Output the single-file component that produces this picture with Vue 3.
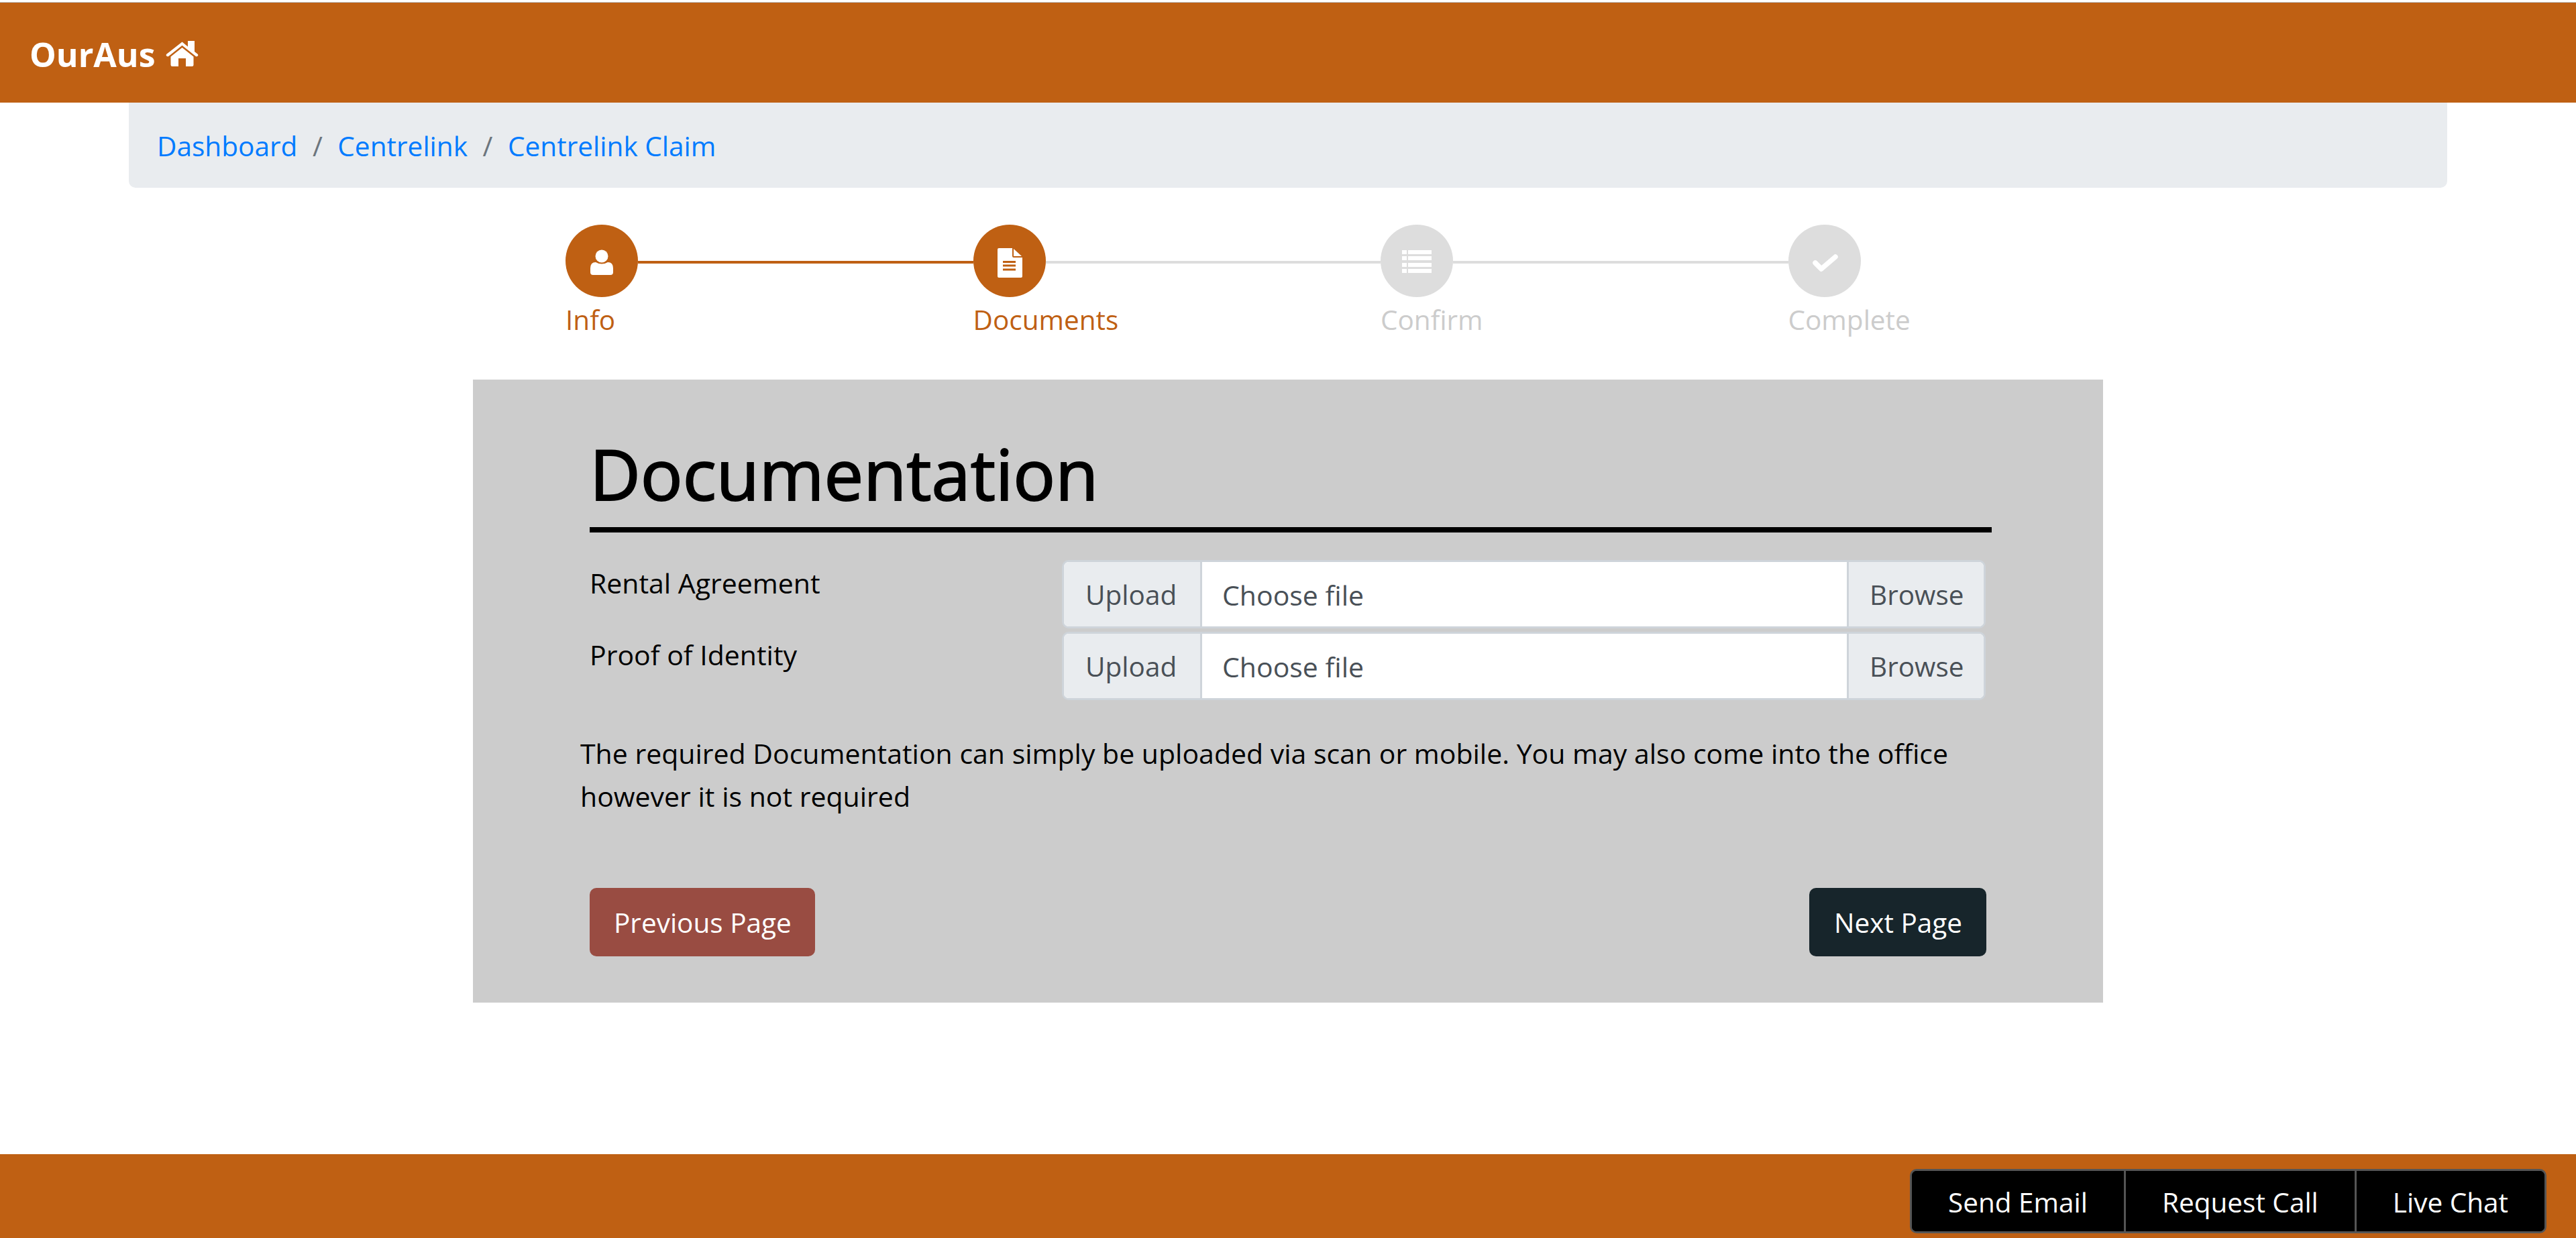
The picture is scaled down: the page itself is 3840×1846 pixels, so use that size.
<script setup>
const crumbs = ['Dashboard', 'Centrelink', 'Centrelink Claim']
const docs = ['Rental Agreement', 'Proof of Identity']
const actions = ['Send Email', 'Request Call', 'Live Chat']
</script>

<template>
  <div class="page">
    <header class="navbar">
      <span class="brand">OurAus</span>
      <svg class="home" viewBox="0 0 49 39">
        <path d="M24.5 2.5 L33 9.5 V1 H43 V17 L47.5 20.5 Q49 22 47.7 23.6 Q46.2 25 44.6 23.8 L24.5 7.8 L4.4 23.8 Q2.8 25 1.3 23.6 Q0 22 1.5 20.5 Z" />
        <path d="M24.5 11 L41.5 24.5 V36.5 Q41.5 39 39 39 H30 V27 H19 V39 H10 Q7.5 39 7.5 36.5 V24.5 Z" />
      </svg>
    </header>

    <nav class="breadcrumb">
      <template v-for="(crumb, i) in crumbs" :key="crumb">
        <span v-if="i > 0" class="sep">/</span>
        <a href="#" class="crumb">{{ crumb }}</a>
      </template>
    </nav>

    <div class="stepper">
      <div class="step done">
        <div class="track">
          <div class="circle">
            <svg viewBox="-3 -1 80 80">
              <circle cx="37" cy="32" r="9.5" />
              <path d="M28 41 Q37 46 46 41 Q54 41 54 50 V56 Q54 60 50 60 H24 Q20 60 20 56 V50 Q20 41 28 41 Z" />
            </svg>
          </div>
          <div class="line"></div>
        </div>
        <span class="step-label">Info</span>
      </div>
      <div class="step done">
        <div class="track">
          <div class="circle">
            <svg viewBox="0 -1 80 80">
              <path d="M24 20 H44 V32 Q44 34 46 34 H59 V62 Q59 64 57 64 H24 Q22 64 22 62 V22 Q22 20 24 20 Z M30 39 V42 H49 V39 Z M30 44.5 V47.5 H49 V44.5 Z M30 50.5 V53.5 H49 V50.5 Z" fill-rule="evenodd" />
              <path d="M46 21 L58 32 H46 Z" />
            </svg>
          </div>
          <div class="line pending"></div>
        </div>
        <span class="step-label">Documents</span>
      </div>
      <div class="step">
        <div class="track">
          <div class="circle">
            <svg viewBox="0 -1 80 80">
              <path d="M18 23 H25 V29 H18 Z M27 23 H62 V29 H27 Z M18 32 H25 V38 H18 Z M27 32 H62 V38 H27 Z M18 42 H25 V48 H18 Z M27 42 H62 V48 H27 Z M18 51 H25 V57 H18 Z M27 51 H62 V57 H27 Z" />
            </svg>
          </div>
          <div class="line pending"></div>
        </div>
        <span class="step-label">Confirm</span>
      </div>
      <div class="step last">
        <div class="track">
          <div class="circle">
            <svg viewBox="0 -1 80 80">
              <path d="M26 42 L35 51 L56 33" fill="none" stroke="#fff" stroke-width="7.5" stroke-linecap="round" stroke-linejoin="round" />
            </svg>
          </div>
        </div>
        <span class="step-label">Complete</span>
      </div>
    </div>

    <main class="card">
      <h1 class="title">Documentation</h1>
      <div class="uploads">
        <div v-for="doc in docs" :key="doc" class="upload-row">
          <label class="doc-label">{{ doc }}</label>
          <div class="file-group">
            <span class="addon upload">Upload</span>
            <span class="file-name">Choose file</span>
            <span class="addon browse">Browse</span>
          </div>
        </div>
      </div>
      <p class="note">The required Documentation can simply be uploaded via scan or mobile. You may also come into the office however it is not required</p>
      <div class="buttons">
        <button class="btn prev">Previous Page</button>
        <button class="btn next">Next Page</button>
      </div>
    </main>

    <footer class="footer">
      <div class="btn-group">
        <button v-for="action in actions" :key="action" class="action">{{ action }}</button>
      </div>
    </footer>
  </div>
</template>

<style>
body {
  margin: 0;
  background: #fff;
}
</style>

<style scoped>
.page {
  min-height: 100vh;
  display: flex;
  flex-direction: column;
  font-family: "Open Sans", "Noto Sans", sans-serif;
  font-size: 40.5px;
  line-height: 60px;
  color: #000;
}
.navbar {
  margin-top: 3px;
  border-top: 1px solid #bbb;
  height: 150px;
  box-sizing: border-box;
  background: #bf6013;
  display: flex;
  align-items: center;
  padding: 4px 0 0 44px;
  color: #fff;
}
.brand {
  font-size: 50px;
  font-weight: 700;
}
.home {
  width: 49px;
  height: 39px;
  margin-left: 15px;
  margin-top: -2px;
  fill: #fff;
}
.breadcrumb {
  margin: 0 192px;
  height: 127px;
  box-sizing: border-box;
  padding: 3px 42px 0;
  font-size: 40.6px;
  background: #e9ecef;
  border-radius: 0 0 10px 10px;
  display: flex;
  align-items: center;
}
.crumb {
  color: #007bff;
  text-decoration: none;
}
.sep {
  color: #6c757d;
  padding: 0 22.5px;
}
.stepper {
  display: flex;
  margin-top: 55px;
  padding-left: 843px;
}
.step {
  width: 607.5px;
  display: flex;
  flex-direction: column;
  align-items: flex-start;
  color: #ccc;
}
.step.last {
  width: 200px;
}
.step.done {
  color: #bf6013;
}
.track {
  align-self: stretch;
  display: flex;
  align-items: center;
}
.circle {
  width: 108px;
  height: 108px;
  flex: none;
  border-radius: 50%;
  background: #ddd;
  display: flex;
  align-items: center;
  justify-content: center;
}
.done .circle {
  background: #bf6013;
}
.circle svg {
  width: 80px;
  height: 80px;
  fill: #fff;
}
.line {
  flex: 1;
  height: 4px;
  margin-top: 3px;
  background: #bf6013;
}
.line.pending {
  background: #ddd;
}
.step-label {
  margin-top: 4px;
  white-space: nowrap;
}
.card {
  width: 2430px;
  box-sizing: border-box;
  margin: 59px auto 0;
  height: 929px;
  padding: 68px 166px 0 174px;
  background: #ccc;
}
.title {
  margin: 0;
  font-size: 104.5px;
  line-height: 144px;
  font-weight: 500;
  -webkit-text-stroke: 2px #000;
  border-bottom: 8px solid #000;
  padding-bottom: 8px;
}
.uploads {
  display: flex;
  flex-direction: column;
  gap: 5px;
  margin-top: 41px;
}
.upload-row {
  display: flex;
}
.doc-label {
  width: 704px;
  flex: none;
  padding-top: 4px;
  font-size: 41px;
}
.file-group {
  width: 1377px;
  height: 102px;
  box-sizing: border-box;
  border: 3px solid #ced4da;
  border-radius: 10px;
  display: flex;
  align-items: center;
  color: #495057;
  background: #fff;
  overflow: hidden;
}
.addon {
  height: 100%;
  display: flex;
  align-items: center;
  padding-top: 2px;
  background: #e9ecef;
  box-sizing: border-box;
}
.upload {
  width: 206px;
  padding-left: 32px;
  border-right: 3px solid #ced4da;
}
.browse {
  width: 204px;
  padding-left: 31px;
  border-left: 3px solid #ced4da;
}
.file-name {
  flex: 1;
  padding: 2px 0 0 30px;
  font-size: 41px;
}
.note {
  margin: 47px 0 0 -14px;
  font-size: 41px;
  line-height: 64px;
  width: 2100px;
}
.buttons {
  display: flex;
  justify-content: space-between;
  margin-top: 105px;
  padding-right: 8px;
}
.btn {
  height: 102px;
  border: 0;
  border-radius: 10px;
  padding: 2px 36px 0;
  font: inherit;
  color: #fff;
}
.prev {
  background: #994c42;
  padding-right: 35px;
}
.next {
  background: #17252b;
  padding-left: 37px;
}
.footer {
  margin-top: auto;
  height: 125px;
  box-sizing: border-box;
  background: #bf6013;
  display: flex;
  justify-content: flex-end;
  padding: 22px 44px 7px 0;
}
.btn-group {
  display: flex;
  border: 3px solid #555;
  border-radius: 10px;
  background: #000;
  overflow: hidden;
}
.action {
  border: 0;
  background: #000;
  color: #fff;
  font: inherit;
  padding: 3px 54px 0;
}
.action + .action {
  border-left: 3px solid #555;
}
</style>
